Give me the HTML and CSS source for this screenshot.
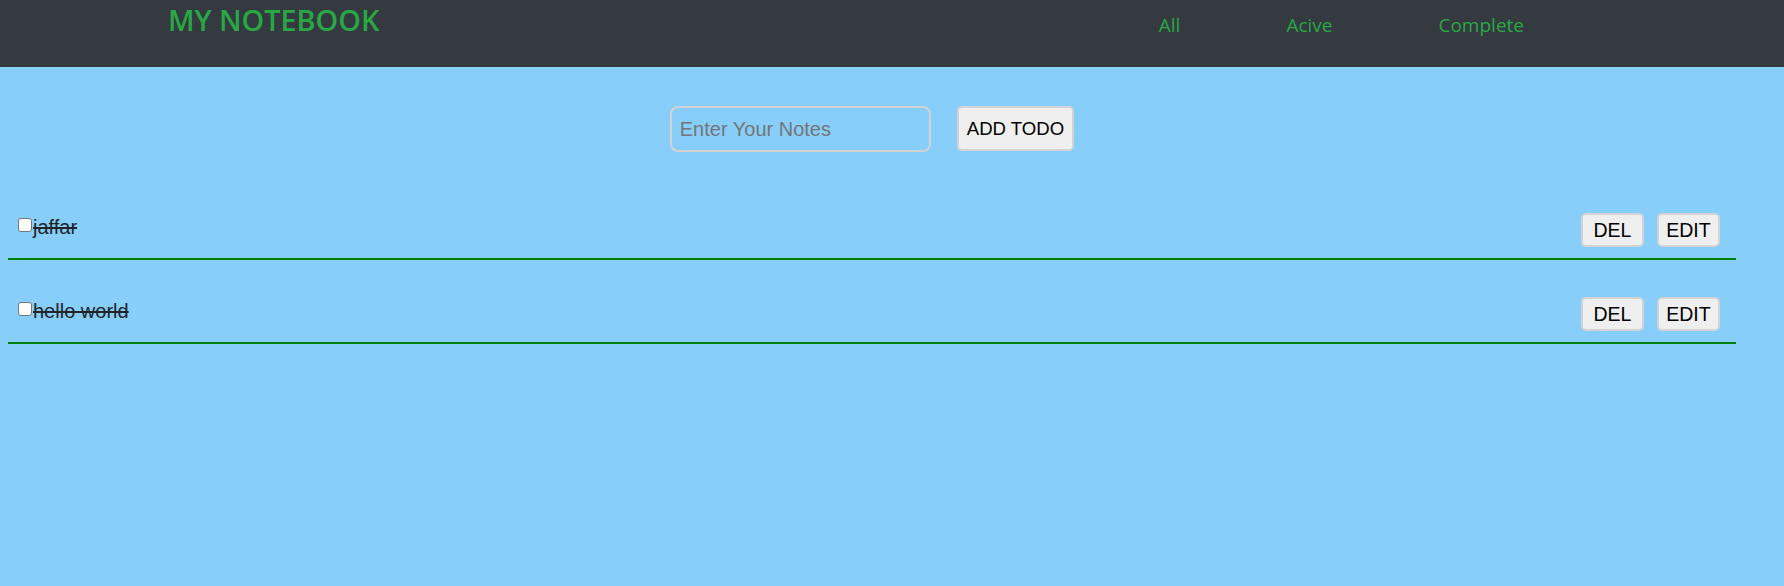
FILE: index.html
```html
<!DOCTYPE html>
<html lang="en">
<head>
<meta charset="utf-8">
<title>My Notebook</title>
<link rel="stylesheet" href="styles.css">
</head>
<body>
<header class="navbar">
  <h1 class="brand">MY NOTEBOOK</h1>
  <nav class="nav">
    <a class="nav-link" href="#">All</a>
    <a class="nav-link" href="#">Acive</a>
    <a class="nav-link" href="#">Complete</a>
  </nav>
</header>
<main class="main">
  <form class="todo-form">
    <input class="todo-input" type="text" placeholder="Enter Your Notes">
    <button class="add-btn" type="button">ADD TODO</button>
  </form>
  <ul class="todo-list">
    <li class="todo-row">
      <label class="todo-left"><input class="todo-check" type="checkbox"><span class="todo-text">jaffar</span></label>
      <div class="todo-actions">
        <button class="act-btn" type="button">DEL</button>
        <button class="act-btn" type="button">EDIT</button>
      </div>
    </li>
    <li class="todo-row">
      <label class="todo-left"><input class="todo-check" type="checkbox"><span class="todo-text">hello world</span></label>
      <div class="todo-actions">
        <button class="act-btn" type="button">DEL</button>
        <button class="act-btn" type="button">EDIT</button>
      </div>
    </li>
  </ul>
</main>
</body>
</html>
```
FILE: styles.css
```css
* { box-sizing: border-box; }
html, body {
  margin: 0;
  padding: 0;
  background: #87cefa;
  min-height: 100%;
}
body {
  font-family: "Liberation Sans", Arial, sans-serif;
  color: #212529;
}
.navbar {
  display: flex;
  justify-content: space-between;
  align-items: flex-start;
  height: 67px;
  background: #343a40;
  padding: 0 260px 0 168px;
}
.brand {
  margin: 0;
  font-family: "Open Sans", sans-serif;
  font-weight: 600;
  font-size: 28.8px;
  line-height: normal;
  color: #28a745;
}
.nav {
  display: flex;
  gap: 106px;
  padding-top: 12px;
}
.nav-link {
  font-family: "Open Sans", sans-serif;
  font-size: 19px;
  line-height: normal;
  color: #28a745;
  text-decoration: none;
}
.main {
  width: 1728px;
  margin: 0 8px;
}
.todo-form {
  display: flex;
  justify-content: center;
  align-items: flex-start;
  gap: 26px;
  margin: 0;
  padding-top: 39px;
}
.todo-input {
  width: 261px;
  height: 46px;
  border: 2px solid #d3d3d3;
  border-radius: 8px;
  background: transparent;
  padding: 0 8px;
  font-family: "Liberation Sans", Arial, sans-serif;
  font-size: 20px;
  color: #212529;
  outline: none;
}
.todo-input::placeholder { color: #757575; }
.add-btn {
  height: 45px;
  padding: 0 8px;
  border: 2px solid #d3d3d3;
  border-radius: 5px;
  background: #efefef;
  font-family: "Liberation Sans", Arial, sans-serif;
  font-size: 18.6px;
  color: #000;
}
.todo-list {
  list-style: none;
  margin: 51px 0 0;
  padding: 0;
  display: flex;
  flex-direction: column;
  gap: 27px;
}
.todo-row {
  display: flex;
  justify-content: space-between;
  align-items: flex-start;
  padding: 10px 16px 11px 10px;
  border-bottom: 2px solid #008000;
}
.todo-left {
  display: flex;
  align-items: flex-start;
  padding-top: 3px;
  font-size: 20px;
  line-height: 23px;
}
.todo-check {
  appearance: none;
  width: 14px;
  height: 14px;
  margin: 2px 1px 0 0;
  border: 1px solid #767676;
  border-radius: 3px;
  background: #fff;
}
.todo-text {
  text-decoration: line-through;
  color: #212529;
}
.todo-actions {
  display: flex;
  gap: 13px;
}
.act-btn {
  width: 63px;
  height: 34px;
  padding: 0;
  border: 2px solid #d3d3d3;
  border-radius: 5px;
  background: #efefef;
  font-family: "Liberation Sans", Arial, sans-serif;
  font-size: 19.5px;
  color: #000;
}
```
